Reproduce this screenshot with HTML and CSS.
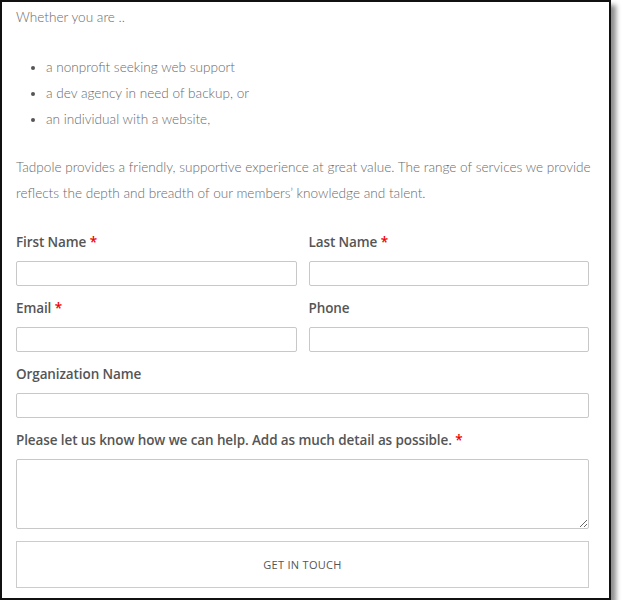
FILE: index.html
```html
<!DOCTYPE html>
<html lang="en">
<head>
<meta charset="utf-8">
<title>Get in touch</title>
<link rel="stylesheet" href="styles.css">
</head>
<body>
<div class="frame">
  <p class="intro">Whether you are ..</p>
  <ul class="who">
    <li>a nonprofit seeking web support</li>
    <li>a dev agency in need of backup, or</li>
    <li>an individual with a website,</li>
  </ul>
  <p class="lead">Tadpole provides a friendly, supportive experience at great value. The range of services we provide reflects the depth and breadth of our members’ knowledge and talent.</p>
  <form class="form">
    <div class="row">
      <div class="field">
        <label class="label">First Name <span class="req">*</span></label>
        <input class="input" type="text">
      </div>
      <div class="field">
        <label class="label">Last Name <span class="req">*</span></label>
        <input class="input" type="text">
      </div>
    </div>
    <div class="row">
      <div class="field">
        <label class="label">Email <span class="req">*</span></label>
        <input class="input" type="text">
      </div>
      <div class="field">
        <label class="label">Phone</label>
        <input class="input" type="text">
      </div>
    </div>
    <div class="field">
      <label class="label">Organization Name</label>
      <input class="input" type="text">
    </div>
    <div class="field">
      <label class="label">Please let us know how we can help. Add as much detail as possible. <span class="req">*</span></label>
      <textarea class="textarea"></textarea>
    </div>
    <button class="submit" type="button">GET IN TOUCH</button>
  </form>
</div>
</body>
</html>
```
FILE: styles.css
```css
html, body {
  margin: 0;
  padding: 0;
  background: #fff;
}
.frame {
  box-sizing: border-box;
  width: 611px;
  height: 600px;
  border: 2px solid #111;
  box-shadow: 5px 5px 5px rgba(0,0,0,0.45);
  padding: 2px 8px 0 14px;
  font-family: Lato, "Liberation Sans", sans-serif;
  font-weight: 300;
  font-size: 13.6px;
  line-height: 26px;
  color: #6a6a6a;
  overflow: hidden;
}
.intro {
  margin: 0 0 24px;
}
.who {
  margin: 0 0 22px;
  padding-left: 30px;
}
.who li::marker {
  color: #555;
}
.lead {
  margin: 0 0 26px;
}
.form {
  display: flex;
  flex-direction: column;
  margin-right: 12px;
}
.row {
  display: grid;
  grid-template-columns: 1fr 1fr;
  column-gap: 12px;
}
.field {
  display: flex;
  flex-direction: column;
  margin-bottom: 12px;
}
.label {
  font-family: "Open Sans", "Liberation Sans", sans-serif;
  font-weight: 600;
  font-size: 13.5px;
  letter-spacing: -0.1px;
  line-height: 20px;
  color: #555;
  margin-bottom: 9px;
}
.req {
  color: #e00;
}
.input {
  box-sizing: border-box;
  height: 25px;
  border: 1px solid #c8c8c8;
  border-radius: 2px;
  margin: 0;
  padding: 2px 6px;
  background: #fff;
}
.textarea {
  box-sizing: border-box;
  height: 70px;
  border: 1px solid #c8c8c8;
  border-radius: 2px;
  margin: 0;
  padding: 4px 6px;
  resize: vertical;
  font-family: inherit;
}
.submit {
  box-sizing: border-box;
  height: 47px;
  border: 1px solid #ccc;
  background: #fff;
  color: #555;
  font-family: "Open Sans", "Liberation Sans", sans-serif;
  font-size: 11px;
  font-weight: 400;
  letter-spacing: 0.3px;
  cursor: pointer;
}
```
